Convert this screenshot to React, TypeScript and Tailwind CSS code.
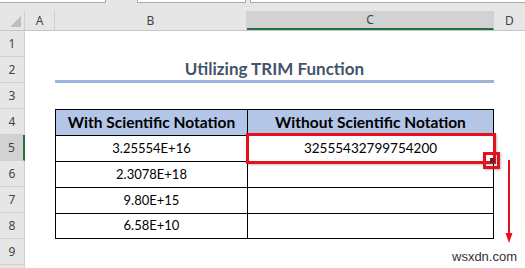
import React from "react";

const rowNums = [1, 2, 3, 4, 5, 6, 7, 8, 9, 10];
const data = ["3.25554E+16", "2.3078E+18", "9.80E+15", "6.58E+10"];

function RowHeader({ n }: { n: number }) {
  const sel = n === 5;
  return (
    <div
      className={
        "w-[25px] shrink-0 h-full flex items-center justify-center border-b border-[#cfcfcf] text-[12px] text-[#444] " +
        (sel ? "bg-[#d2d2d2] border-r-2 border-r-[#217346]" : "bg-[#e6e6e6] border-r border-r-[#cfcfcf]")
      }
      style={{ fontFamily: '"Noto Sans", "Open Sans", sans-serif' }}
    >
      {n < 10 ? n : ""}
    </div>
  );
}

export default function App() {
  const cell = '"Lato", "Noto Sans", sans-serif';
  return (
    <div className="relative w-[525px] h-[268px] overflow-hidden bg-white">
      {/* top strip */}
      <div className="h-[11px] bg-[#e6e6e6] flex items-start">
        <div className="w-[106px] h-[3px] bg-white border-b border-r border-[#aaa]" />
        <div className="w-[31px]" />
        <div className="w-[109px] h-[3px] bg-white border-b border-x border-[#aaa]" />
        <div className="w-[4px]" />
        <div className="flex-1 h-[3px] bg-white border-b border-l border-[#aaa]" />
      </div>
      {/* column headers */}
      <div
        className="h-[20px] flex bg-[#e6e6e6] text-[12px] text-[#444] border-b border-[#c6c6c6]"
        style={{ fontFamily: '"Noto Sans", "Open Sans", sans-serif' }}
      >
        <div className="w-[25px] shrink-0 relative border-r border-[#cfcfcf]">
          <div className="absolute right-[3px] bottom-[3px] w-0 h-0 border-l-[11px] border-l-transparent border-b-[11px] border-b-[#bdbdbd]" />
        </div>
        <div className="w-[30px] shrink-0 flex items-center justify-center border-r border-[#cfcfcf]">A</div>
        <div className="w-[192px] shrink-0 flex items-center justify-center border-r border-[#cfcfcf]">B</div>
        <div className="w-[247px] shrink-0 flex items-center justify-center bg-[#d2d2d2] border-b-2 border-[#217346] border-r border-r-[#cfcfcf]">C</div>
        <div className="flex-1 flex items-center justify-center">D</div>
      </div>
      {/* rows */}
      {rowNums.map((n) => {
        const inTable = n >= 4 && n <= 8;
        const isHead = n === 4;
        const idx = n - 5;
        return (
          <div key={n} className="h-[26px] flex">
            <RowHeader n={n} />
            <div className="w-[30px] shrink-0" />
            {n === 2 ? (
              <div
                className="w-[439px] shrink-0 flex items-center justify-center border-b-[3px] border-[#9fb4dc] text-[17px] font-bold text-[#44546a] pt-[1px]"
                style={{ fontFamily: cell }}
              >
                Utilizing TRIM Function
              </div>
            ) : inTable ? (
              <>
                <div
                  className={
                    "w-[192px] shrink-0 flex items-center justify-center border-l border-t border-black text-black " +
                    (isHead ? "bg-[#b4c6e7] font-bold text-[15.5px]" : "text-[13px]") +
                    (n === 8 ? " border-b" : "")
                  }
                  style={{ fontFamily: cell }}
                >
                  {isHead ? "With Scientific Notation" : data[idx]}
                </div>
                <div
                  className={
                    "w-[247px] shrink-0 flex items-center justify-center border-l border-r border-t border-black text-black " +
                    (isHead ? "bg-[#b4c6e7] font-bold text-[15.5px]" : "text-[13.5px]") +
                    (n === 8 ? " border-b" : "")
                  }
                  style={{ fontFamily: cell }}
                >
                  {isHead ? "Without Scientific Notation" : n === 5 ? "32555432799754200" : ""}
                </div>
              </>
            ) : null}
          </div>
        );
      })}
      {/* red selection box */}
      <div className="absolute left-[246px] top-[133px] w-[250px] h-[31px] border-[3px] border-[#e3121c] shadow-[1px_1px_2px_rgba(0,0,0,0.25)]" />
      {/* fill handle */}
      <div className="absolute left-[490px] top-[158px] w-[5px] h-[5px] bg-[#5b2b2b]" />
      <div className="absolute left-[483px] top-[152px] w-[17px] h-[17px] border-[3px] border-[#e3121c] shadow-[1px_1px_2px_rgba(0,0,0,0.25)]" />
      {/* arrow */}
      <svg className="absolute left-[503px] top-[160px]" width="14" height="86" viewBox="0 0 14 86">
        <line x1="6" y1="0" x2="6" y2="74" stroke="#e3121c" strokeWidth="2" />
        <polygon points="2.5,73 9.5,73 6,83" fill="#e3121c" />
      </svg>
      {/* watermark */}
      <div
        className="absolute left-[452px] top-[250px] text-[13px] text-[#333] leading-none"
        style={{ fontFamily: '"Liberation Sans", Arial, sans-serif' }}
      >
        wsxdn.com
      </div>
    </div>
  );
}
